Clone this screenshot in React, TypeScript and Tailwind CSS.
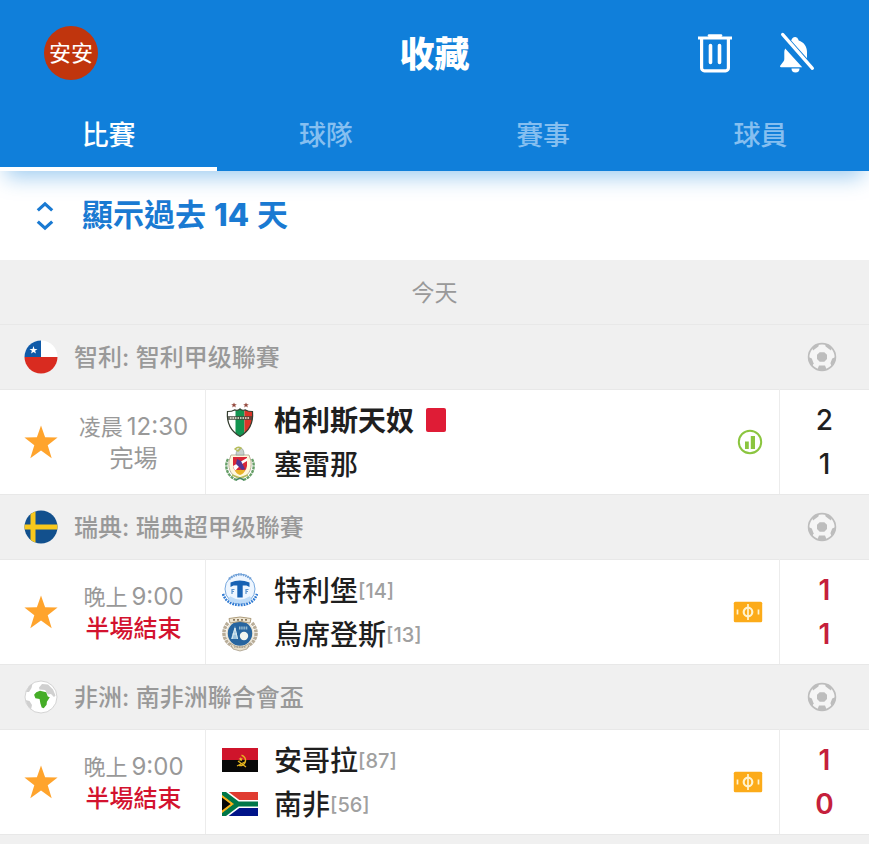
import type { ReactNode } from "react";

function TrashIcon() {
  return (
    <svg viewBox="0 0 36 40" className="h-10 w-9" fill="none" stroke="#fff" aria-hidden="true">
      <path d="M12 2.600h12" strokeWidth="2.600" strokeLinecap="round" />
      <path d="M1 5h34" strokeWidth="3.200" />
      <path d="M4.600 5v30a2.800 2.800 0 0 0 2.800 2.800h21.200a2.800 2.800 0 0 0 2.800-2.800V5" strokeWidth="3.200" />
      <path d="M13.500 12.500v17M22.500 12.500v17" strokeWidth="3.600" strokeLinecap="round" />
    </svg>
  );
}

function BellOffIcon() {
  return (
    <svg viewBox="0 0 36 42" className="h-[42px] w-9" aria-hidden="true">
      <path d="M6.200 16.400 23.200 35.200H2c-.9 0-1.200-.7-.8-1.400l3.400-4.600c.5-.7.7-1.400.7-2.200V20c0-1.400.3-2.600.9-3.600Z" fill="#fff" />
      <path d="M12.200 8.600 13 6.800a3.400 3.400 0 0 1 6.300.6l.4 1.200c5 1.500 8.300 5.900 8.300 11.200v6.400Z" fill="#fff" />
      <path d="M12.500 36.400h8a4 4 0 0 1-8 0Z" fill="#fff" />
      <path d="M3.600 2.400 33.400 36.400" stroke="#fff" strokeWidth="3.200" strokeLinecap="round" />
    </svg>
  );
}

function ExpandIcon() {
  return (
    <svg viewBox="0 0 18 30" className="h-[30px] w-[18px]" fill="none" stroke="#1a7ad2" strokeWidth="3.200" aria-hidden="true">
      <path d="m1.800 9.400 7.200-6.600 7.200 6.600M1.800 20.600l7.200 6.600 7.200-6.600" />
    </svg>
  );
}

function StarIcon() {
  return (
    <svg viewBox="0 0 34 34" className="h-[34px] w-[34px]" aria-hidden="true">
      <path d="m17 .5 4.100 11.800 12.500.3-9.900 7.600 4 13L17 25.600 6.300 33.200l4-13-9.900-7.600 12.500-.3Z" fill="#ffa42d" />
    </svg>
  );
}

function BallIcon() {
  return (
    <svg viewBox="0 0 30 30" className="h-[30px] w-[30px]" aria-hidden="true">
      <circle cx="15" cy="15" r="13.400" fill="#f5f5f5" stroke="#bdbdbd" strokeWidth="1.700" />
      <g fill="#bdbdbd">
        <path d="m12.700 10.200h4.600l2.700 2.500v4.400l-2.700 2.700h-4.600L10 17.100v-4.400Z" />
        <path d="m5.200 5.300 3-2.900 3.800-.4-.6 2.600-5.400 3.800Z" />
        <path d="m24.800 5.300-3-2.900-3.800-.4.600 2.600 5.400 3.800Z" />
        <path d="m1.400 15 3.400 1.400 1.800 4.800-1.300 3C2.600 22.200 1.200 18.800 1.400 15Z" />
        <path d="m28.600 15-3.400 1.400-1.800 4.800 1.300 3c2.700-2 4.100-5.400 3.900-9.200Z" />
        <path d="m12 23.600h6l1.600 3.800c-3 1.500-6.200 1.500-9.200 0Z" />
      </g>
    </svg>
  );
}

function StatsIcon() {
  return (
    <svg viewBox="0 0 26 26" className="h-[26px] w-[26px]" aria-hidden="true">
      <circle cx="13" cy="13" r="11.200" fill="none" stroke="#8bc53f" strokeWidth="2" />
      <path d="M8 12.500h3.800V20H8ZM13.800 7h4.200v13h-4.200Z" fill="#8bc53f" />
    </svg>
  );
}

function PitchIcon() {
  return (
    <svg viewBox="0 0 30 22" className="h-[22px] w-[30px]" aria-hidden="true">
      <rect x=".8" y=".8" width="28.400" height="20.400" rx="1.500" fill="#fcab19" />
      <g fill="none" stroke="#fff3cf">
        <circle cx="15" cy="11" r="4.300" strokeWidth="2.200" />
        <path d="M15 3v16M4.500 8.500v5M25.500 8.500v5" strokeWidth="1.700" />
      </g>
    </svg>
  );
}

function ChileFlag() {
  return (
    <svg viewBox="0 0 34 34" className="h-[34px] w-[34px]" aria-hidden="true">
      <clipPath id="chile"><circle cx="17" cy="17" r="16.500" /></clipPath>
      <g clipPath="url(#chile)">
        <path d="M0 0h34v17H0Z" fill="#fff" />
        <path d="M0 0h17v17H0Z" fill="#0f5aa8" />
        <path d="M0 17h34v17H0Z" fill="#d92b20" />
        <path d="m9.500 6 1 2.900h3l-2.400 1.800.9 2.900-2.500-1.700L7 13.600l.9-2.900-2.400-1.800h3Z" fill="#fff" />
      </g>
    </svg>
  );
}

function SwedenFlag() {
  return (
    <svg viewBox="0 0 34 34" className="h-[34px] w-[34px]" aria-hidden="true">
      <clipPath id="sweden"><circle cx="17" cy="17" r="16.500" /></clipPath>
      <g clipPath="url(#sweden)">
        <path d="M0 0h34v34H0Z" fill="#12508d" />
        <path d="M6.500 0h5v34h-5ZM0 14.500h34v5H0Z" fill="#f8c81c" />
      </g>
    </svg>
  );
}

function AfricaGlobe() {
  return (
    <svg viewBox="0 0 34 34" className="h-[34px] w-[34px]" aria-hidden="true">
      <circle cx="17" cy="17" r="16" fill="#fff" stroke="#d4d4d4" />
      <path d="M15 7.500 18 4l6 .5 5 5 2.500 6-1.500 1.500-3-3-3 .5-3-4.500-5.500-.5Z" fill="#d0d0d0" />
      <path d="m2 12 3-6 3.500-2.500-1 4.500L5 12ZM1.500 20l4 1 2.500 4-1 4.500L3.500 25.500Z" fill="#d0d0d0" />
      <path d="m12.300 12.200 3.700-1.400 6.200 1.400 1.600 4.400 2 .6-2.900 4.600-.3 3-2.900 3.400-2-.6-1.300-4-.8-4.600-4.200-.7-1.300-3.500Z" fill="#45ad27" />
    </svg>
  );
}

function PalestinoCrest() {
  return (
    <svg viewBox="0 0 36 36" className="h-9 w-9" aria-hidden="true">
      <clipPath id="palestino"><path d="M5.500 9.500q4.500 0 7-1.600Q16 9 18 6.800 20 9 23.500 7.900q2.500 1.600 7 1.600 1.500 17-12.500 25Q4 26.500 5.500 9.500Z" /></clipPath>
      <g clipPath="url(#palestino)">
        <path d="M4 6h28v30H4Z" fill="#fff" />
        <path d="M13.500 6h9v30h-9Z" fill="#139450" />
        <path d="M22.500 6H33v30H22.500Z" fill="#dc3529" />
        <path d="M4 14h28v4H4Z" fill="#44463b" opacity=".75" />
        <path d="M8 16h20" stroke="#f5eee0" strokeWidth="1.600" strokeDasharray="1.500 1" />
      </g>
      <path d="M5.500 9.500q4.500 0 7-1.600Q16 9 18 6.800 20 9 23.500 7.900q2.500 1.600 7 1.600 1.500 17-12.500 25Q4 26.500 5.500 9.500Z" fill="none" stroke="#343e30" strokeWidth="1.200" />
      <path d="m12 .5.8 1.800h2l-1.600 1.200.6 1.900-1.800-1.100-1.800 1.100.6-1.900-1.600-1.200h2ZM24 .5l.8 1.800h2l-1.600 1.200.6 1.900-1.800-1.100-1.800 1.100.6-1.900-1.600-1.200h2Z" fill="#94483d" />
    </svg>
  );
}

function SerenaCrest() {
  return (
    <svg viewBox="0 0 36 36" className="h-9 w-9" aria-hidden="true">
      <path d="M6 13C2 20 5 31 15 34M30 13c4 7 1 18-9 21" fill="none" stroke="#679f68" strokeWidth="2.400" strokeDasharray="3 .8" />
      <path d="M9 9h18l2 6c1 10-3 15-11 18C10 30 6 25 7 15Z" fill="#fff8dd" stroke="#bbb49c" />
      <path d="M11 11h14v9q-1 6-7 8-6-2-7-8Z" fill="#d92737" />
      <path d="m11 20 14-8v3q-6 3-12 10Z" fill="#fff" />
      <path d="m15 13 4 2 4 8-3 1-6-6Z" fill="#513593" />
      <path d="M13 24h10q-1 4-5 5-4-1-5-5Z" fill="#e9b42a" />
      <path d="M14 9q0-6 5-7 3 1 3 7Z" fill="#c9d1cc" stroke="#8d9c95" strokeWidth=".7" />
      <path d="M13 3q3-3 6-1l-3 3ZM10 29l8 3 8-3" fill="none" stroke="#b6bd5a" strokeWidth="1.400" />
      <path d="m14 34 4-2 4 2" fill="none" stroke="#468764" strokeWidth="1.500" />
    </svg>
  );
}

function TrelleborgCrest() {
  return (
    <svg viewBox="0 0 36 36" className="h-9 w-9" aria-hidden="true">
      <circle cx="18" cy="17" r="15" fill="#eef6ff" stroke="#78a9df" strokeWidth="1" />
      <path d="M7 7Q18-2 29 7" fill="none" stroke="#6f9fd6" strokeWidth="2.400" strokeDasharray="1.500 1" />
      <path d="M8.500 15V10.500q9-4 19 0V15l-3-1.500h-3.800v12h-5.400v-12h-3.800Z" fill="#1762b4" />
      <path d="M10 22v-4.500h2.500M10 19.500h2M24 22v-4.500h2.500M24 19.500h2" fill="none" stroke="#5d95cf" strokeWidth="1.200" />
      <path d="M7 26q11 7 22 0" fill="none" stroke="#bddbf8" strokeWidth="4" />
      <path d="M1 22q4 11 17 11t17-11" fill="none" stroke="#307bd3" strokeWidth="2.600" strokeDasharray="1.800 1" />
    </svg>
  );
}

function UtsiktenCrest() {
  return (
    <svg viewBox="0 0 36 36" className="h-9 w-9" aria-hidden="true">
      <path d="M6 7C-2 16 2 29 16 32M30 7c8 9 4 22-10 25" fill="none" stroke="#b9ad98" strokeWidth="3.500" strokeDasharray="3 .7" />
      <circle cx="18" cy="17.500" r="13" fill="#27659f" stroke="#ede5d3" strokeWidth="1.500" />
      <path d="M7 2.500q11-3 22 0l-1 4.500Q18 4 8 7Z" fill="#eee6d3" stroke="#ae9d7d" />
      <path d="M11 3.800h14" stroke="#8c7b60" strokeWidth="1.800" strokeDasharray="2 2" />
      <path d="M13 10 9 23h7Z" fill="#9bc2dd" />
      <path d="m13 12-3 11M13 12l2.500 11M10.500 18h4.500" stroke="#e0edf0" strokeWidth=".9" />
      <circle cx="22" cy="20" r="4.200" fill="#f1f5ef" />
      <path d="M17 12h9" stroke="#93b9cf" strokeWidth="3" strokeDasharray="1.500 .7" />
      <path d="m8 27 7 4h6l7-4-3 6-7 2-7-2Z" fill="#e7dec9" stroke="#9d927e" strokeWidth=".7" />
      <path d="M12 31h12" stroke="#8f8a7e" strokeWidth="1.200" strokeDasharray="1.500 1" />
    </svg>
  );
}

function AngolaFlag() {
  return (
    <svg viewBox="0 0 36 24" className="h-6 w-9" aria-hidden="true">
      <path d="M0 0h36v12H0Z" fill="#cf142b" />
      <path d="M0 12h36v12H0Z" fill="#080808" />
      <path d="M19.500 7.200a5 5 0 1 1-2.500 10.200" fill="none" stroke="#e5b51f" strokeWidth="1.400" />
      <path d="m16 13 8 6M15 18l8-4" stroke="#e5b51f" strokeWidth="1.200" />
      <path d="m18.800 9 .6 1.600H21l-1.300 1 .5 1.700-1.400-1-1.400 1 .5-1.700-1.300-1h1.700Z" fill="#f1c72e" />
    </svg>
  );
}

function SouthAfricaFlag() {
  return (
    <svg viewBox="0 0 36 24" className="h-6 w-9" aria-hidden="true">
      <clipPath id="south-africa"><path d="M0 0h36v24H0Z" /></clipPath>
      <g clipPath="url(#south-africa)" fill="none">
        <path d="M0 0h36v12H0Z" fill="#e03c31" />
        <path d="M0 12h36v12H0Z" fill="#001489" />
        <path d="m0 0 16 12L0 24M16 12h20" stroke="#fff" strokeWidth="8" />
        <path d="M-2 0 14 12-2 24Z" fill="#080808" stroke="#ffb81c" strokeWidth="4" />
        <path d="m0 0 16 12L0 24M16 12h20" stroke="#007749" strokeWidth="4.800" />
        <path d="M-2 3 10 12-2 21Z" fill="#080808" stroke="#ffb81c" strokeWidth="1.600" />
      </g>
    </svg>
  );
}

type Team = { name: string; crest: ReactNode; score: string; rank?: string; winner?: boolean; redCard?: boolean };
type Match = {
  country: string;
  league: string;
  emblem: ReactNode;
  period: string;
  time: string;
  status: string;
  live: boolean;
  teams: Team[];
};

const tabs = ["比賽", "球隊", "賽事", "球員"];

const matches: Match[] = [
  {
    country: "智利", league: "智利甲级聯賽", emblem: <ChileFlag />,
    period: "凌晨", time: "12:30", status: "完場", live: false,
    teams: [
      { name: "柏利斯天奴", crest: <PalestinoCrest />, score: "2", winner: true, redCard: true },
      { name: "塞雷那", crest: <SerenaCrest />, score: "1" },
    ],
  },
  {
    country: "瑞典", league: "瑞典超甲级聯賽", emblem: <SwedenFlag />,
    period: "晚上", time: "9:00", status: "半場結束", live: true,
    teams: [
      { name: "特利堡", crest: <TrelleborgCrest />, score: "1", rank: "[14]" },
      { name: "烏席登斯", crest: <UtsiktenCrest />, score: "1", rank: "[13]" },
    ],
  },
  {
    country: "非洲", league: "南非洲聯合會盃", emblem: <AfricaGlobe />,
    period: "晚上", time: "9:00", status: "半場結束", live: true,
    teams: [
      { name: "安哥拉", crest: <AngolaFlag />, score: "1", rank: "[87]" },
      { name: "南非", crest: <SouthAfricaFlag />, score: "0", rank: "[56]" },
    ],
  },
];

function MatchSection({ match }: { match: Match }) {
  return (
    <section>
      <header className="-mb-px flex h-[66px] items-center justify-between border-y border-[#e8e8e8] bg-[#f0f0f0] pr-8 pl-6">
        <h3 className="flex items-center gap-4 text-2xl font-medium text-[#999]">
          {match.emblem}
          <span className="pt-0.5">{match.country}: {match.league}</span>
        </h3>
        <BallIcon />
      </header>
      <div className="flex h-[105px]">
        <div className="flex w-[206px] shrink-0 items-center border-r border-[#ececec] pl-6">
          <button type="button" aria-label="收藏"><StarIcon /></button>
          <div className="flex flex-1 flex-col items-center pt-0.5 pl-1 text-2xl leading-8 text-[#999]">
            <p className="flex items-center gap-1">
              <span className="text-[22px]">{match.period}</span>
              <span>{match.time}</span>
            </p>
            <p className={match.live ? "font-medium text-[#d3122e]" : ""}>{match.status}</p>
          </div>
        </div>
        <div className="flex min-w-0 flex-1 items-center justify-between px-4">
          <ul>
            {match.teams.map((team) => (
              <li key={team.name} className="flex h-11 items-center">
                {team.crest}
                <span className={team.winner ? "ml-4 pt-0.5 text-[28px] font-bold text-[#1f1f1f]" : "ml-4 pt-0.5 text-[28px] font-medium text-[#1f1f1f]"}>
                  {team.name}
                </span>
                {team.rank && <span className="pt-0.5 text-xl font-medium text-[#a0a0a0]">{team.rank}</span>}
                {team.redCard && <span className="ml-3 h-6 w-5 rounded-xs bg-[#df1c36]" role="img" aria-label="紅牌" />}
              </li>
            ))}
          </ul>
          {match.live ? <PitchIcon /> : <StatsIcon />}
        </div>
        <div className="flex w-[90px] shrink-0 flex-col items-center justify-center border-l border-[#ececec]">
          {match.teams.map((team) => (
            <span
              key={team.name}
              className={match.live ? "h-11 text-[28px] leading-[44px] font-semibold text-[#c51f3c]" : "h-11 text-[28px] leading-[44px] font-medium text-[#1f1f1f]"}
            >
              {team.score}
            </span>
          ))}
        </div>
      </div>
    </section>
  );
}

export default function App() {
  return (
    <div className="min-h-screen bg-[#f0f0f0] font-['Inter','Noto_Sans_CJK_TC',sans-serif]">
      <header className="relative bg-[#107fda] text-white shadow-[0_12px_20px_-6px_rgba(16,127,218,0.4)]">
        <div className="grid h-[106px] grid-cols-[1fr_auto_1fr] items-center px-11">
          <button type="button" className="flex h-[54px] w-[54px] items-center justify-center rounded-full bg-[#c0350d] text-[22px]">
            安安
          </button>
          <h1 className="pt-0.5 text-[35px] font-black">收藏</h1>
          <div className="flex items-center justify-end gap-[46px] pr-2.5">
            <button type="button" aria-label="刪除"><TrashIcon /></button>
            <button type="button" aria-label="關閉通知"><BellOffIcon /></button>
          </div>
        </div>
        <nav className="grid grid-cols-4">
          {tabs.map((tab, i) => (
            <button
              key={tab}
              type="button"
              className={i === 0
                ? "h-[65px] border-b-4 border-white text-[27px] font-medium"
                : "h-[65px] border-b-4 border-transparent text-[27px] font-medium text-[#86bff0]"}
            >
              {tab}
            </button>
          ))}
        </nav>
      </header>
      <main className="bg-white">
        <button type="button" className="flex h-[89px] w-full items-center gap-7 pl-9 text-[31px] font-bold text-[#1a7ad2]">
          <ExpandIcon />
          <span className="flex items-center gap-2">
            <span>顯示過去</span>
            <span className="font-extrabold">14</span>
            <span>天</span>
          </span>
        </button>
        <h2 className="flex h-16 items-center justify-center bg-[#f0f0f0] pt-0.5 text-[23px] text-[#999]">今天</h2>
        {matches.map((match) => <MatchSection key={match.country} match={match} />)}
      </main>
      <div className="border-t border-[#e8e8e8]" />
    </div>
  );
}
